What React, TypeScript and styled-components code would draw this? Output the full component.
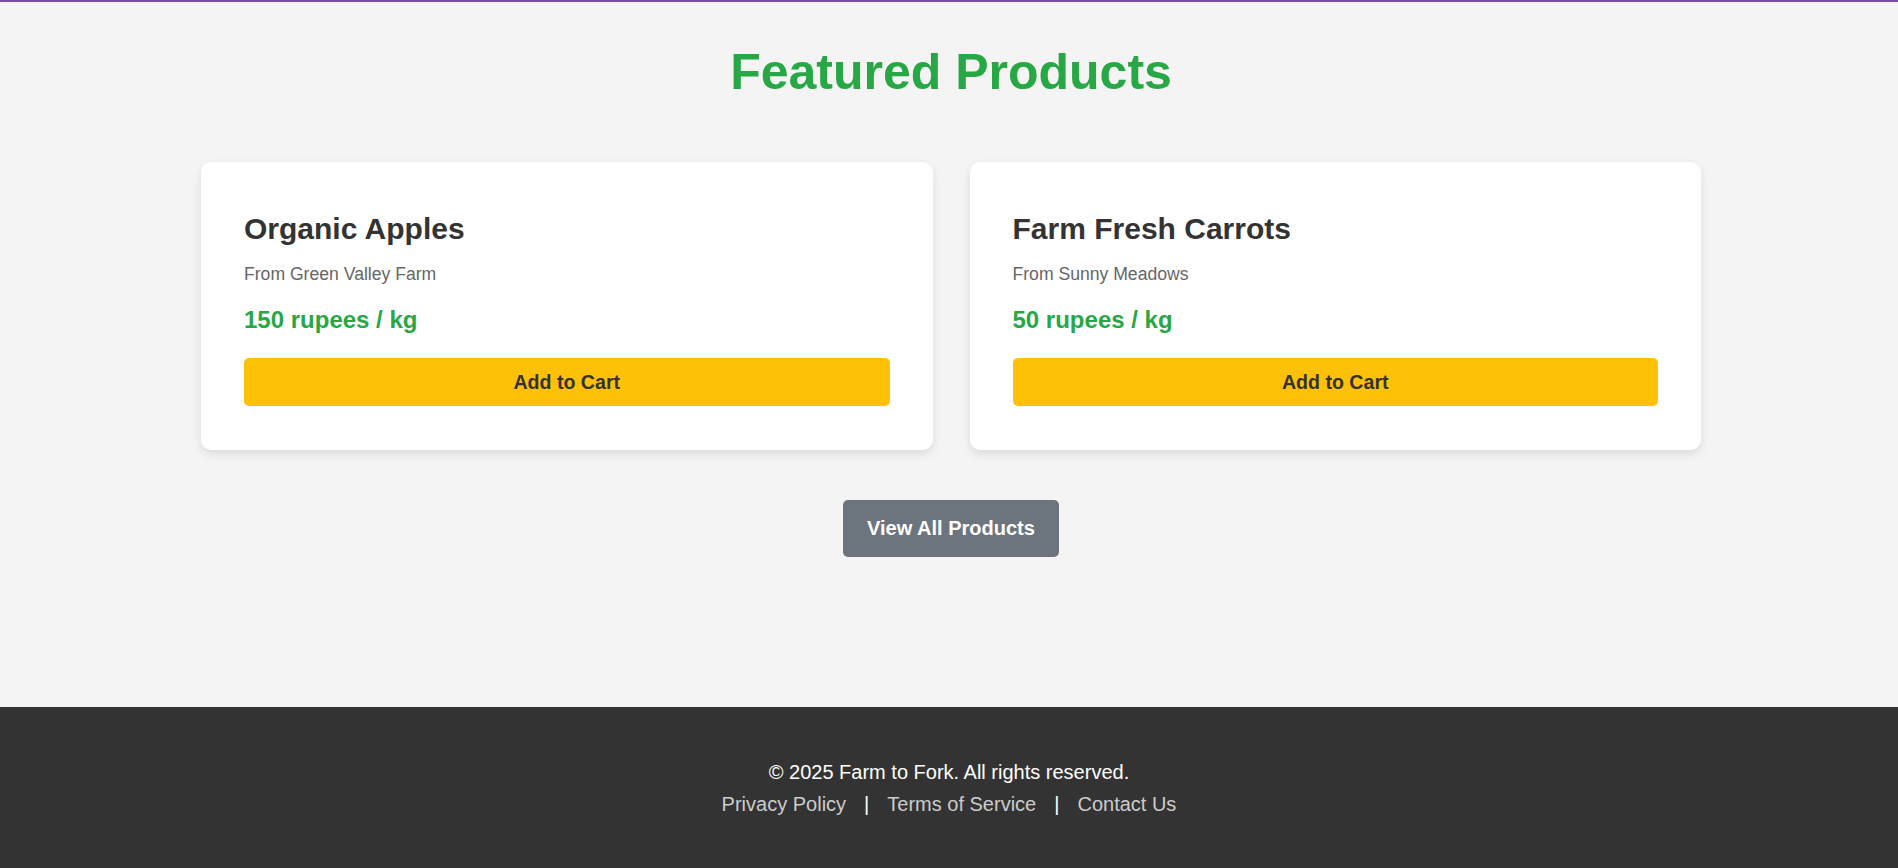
import React from "react";
import styled, { createGlobalStyle } from "styled-components";

const GlobalStyle = createGlobalStyle`
  html, body {
    margin: 0;
    padding: 0;
    background: #f4f4f4;
    font-family: "Liberation Sans", Arial, sans-serif;
  }
  * { box-sizing: border-box; }
`;

const TopBar = styled.div`
  height: 2px;
  background: #774ca4;
`;

const Main = styled.main`
  padding: 40.5px 0 150px 4px;
  display: flex;
  flex-direction: column;
  align-items: center;
`;

const Title = styled.h2`
  margin: 0 0 61px;
  font-size: 50px;
  font-weight: 700;
  color: #28a745;
  text-align: center;
`;

const Grid = styled.div`
  width: 1500px;
  display: grid;
  grid-template-columns: 1fr 1fr;
  gap: 37px;
`;

const Card = styled.div`
  background: #fff;
  border-radius: 10px;
  padding: 50px 43px 43.5px;
  box-shadow: 0 4px 10px rgba(0, 0, 0, 0.1);
  display: flex;
  flex-direction: column;
`;

const CardTitle = styled.h3`
  margin: 0 0 18px;
  font-size: 30px;
  font-weight: 700;
  color: #333;
`;

const Farm = styled.p`
  margin: 0 0 21.5px;
  font-size: 17.6px;
  color: #666;
`;

const Price = styled.p`
  margin: 0 0 24px;
  font-size: 24px;
  font-weight: 700;
  color: #28a745;
`;

const CartButton = styled.button`
  height: 48px;
  border: none;
  border-radius: 5px;
  background: #ffc107;
  color: #333;
  font-family: inherit;
  font-size: 19.6px;
  font-weight: 700;
  cursor: pointer;
`;

const ViewAll = styled.button`
  margin-top: 50.5px;
  padding: 0 24px;
  height: 57px;
  border: none;
  border-radius: 5px;
  background: #6c757d;
  color: #fff;
  font-family: inherit;
  font-size: 20px;
  font-weight: 700;
  cursor: pointer;
`;

const Footer = styled.footer`
  background: #333;
  padding: 54px 0 70px;
  display: flex;
  flex-direction: column;
  align-items: center;
  gap: 9px;
`;

const Copy = styled.p`
  margin: 0;
  font-size: 20px;
  color: #fff;
`;

const Links = styled.nav`
  display: flex;
  align-items: center;
  gap: 18px;
  font-size: 20px;
`;

const FooterLink = styled.a`
  color: #ccc;
  text-decoration: none;
`;

const Sep = styled.span`
  color: #fff;
`;

const products = [
  { name: "Organic Apples", farm: "Green Valley Farm", price: 150 },
  { name: "Farm Fresh Carrots", farm: "Sunny Meadows", price: 50 },
];

export default function App() {
  return (
    <>
      <GlobalStyle />
      <TopBar />
      <Main>
        <Title>Featured Products</Title>
        <Grid>
          {products.map((p) => (
            <Card key={p.name}>
              <CardTitle>{p.name}</CardTitle>
              <Farm>From {p.farm}</Farm>
              <Price>{p.price} rupees / kg</Price>
              <CartButton>Add to Cart</CartButton>
            </Card>
          ))}
        </Grid>
        <ViewAll>View All Products</ViewAll>
      </Main>
      <Footer>
        <Copy>© 2025 Farm to Fork. All rights reserved.</Copy>
        <Links>
          <FooterLink href="#">Privacy Policy</FooterLink>
          <Sep>|</Sep>
          <FooterLink href="#">Terms of Service</FooterLink>
          <Sep>|</Sep>
          <FooterLink href="#">Contact Us</FooterLink>
        </Links>
      </Footer>
    </>
  );
}
